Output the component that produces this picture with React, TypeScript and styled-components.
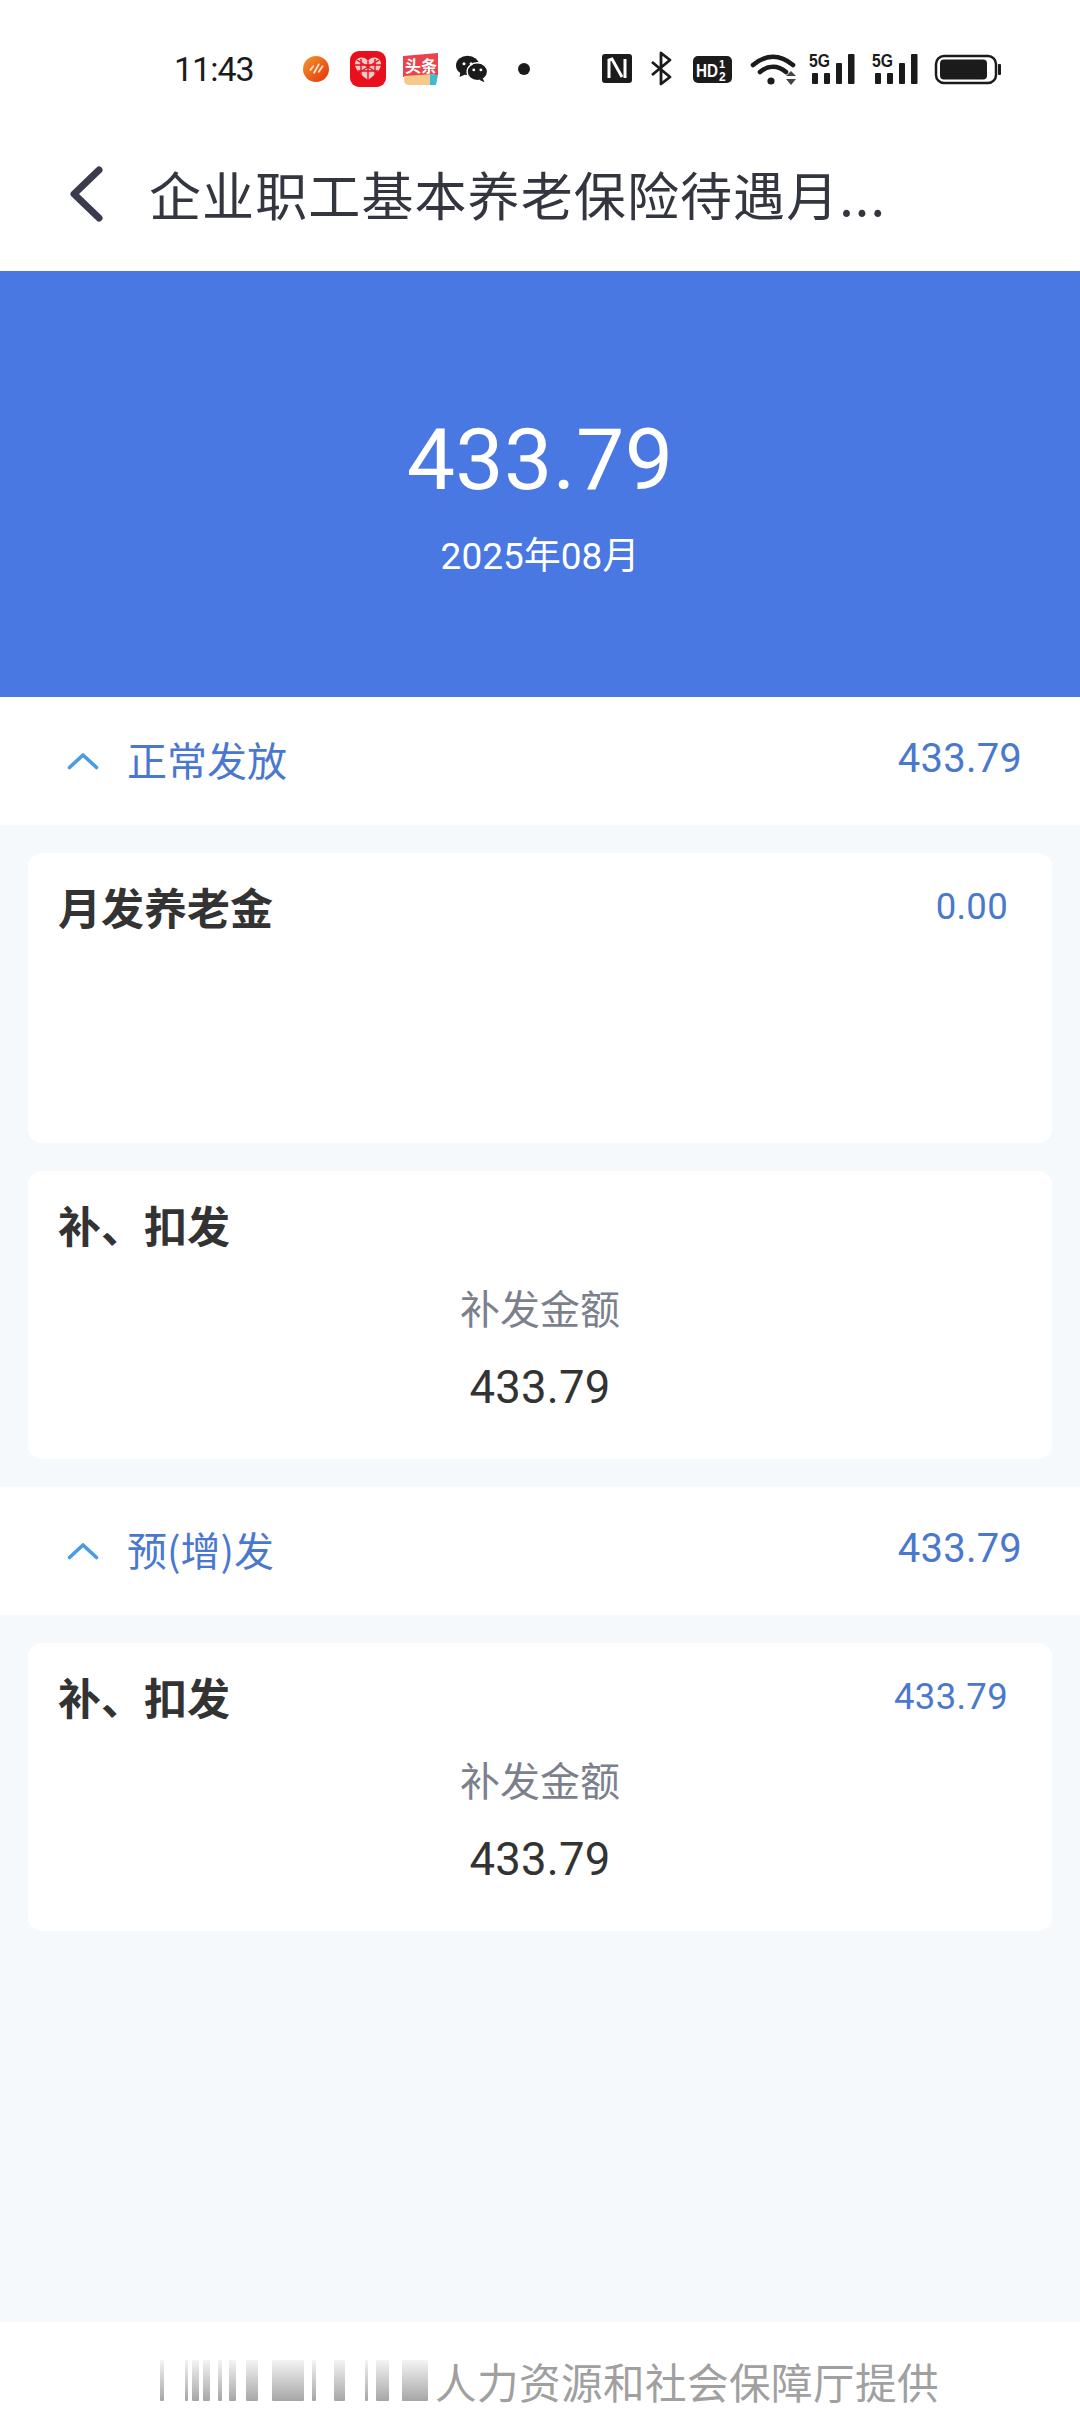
import React from "react";
import styled, { createGlobalStyle } from "styled-components";

const Global = createGlobalStyle`
  html, body { margin: 0; padding: 0; background: #f5f9fc; }
  body { font-family: "Roboto", "Noto Sans CJK SC", sans-serif; }
  * { box-sizing: border-box; }
`;
const Page = styled.div`
  width: 1080px; height: 2412px; display: flex; flex-direction: column; background: #f5f9fc; overflow: hidden;
`;
const StatusBar = styled.div`
  height: 130px; background: #fff; display: flex; align-items: center; padding: 8px 26px 0 174px; color: #1b1b1b; flex: none;
`;
const Clock = styled.div`
  font: 400 34px "Roboto", sans-serif; width: 126px; letter-spacing: -1px; margin-top: -1px;
`;
const AppIcons = styled.div`
  display: flex; align-items: center; width: 300px;
`;
const AppIcon = styled.svg<{ $ml: number }>`
  margin-left: ${(p) => p.$ml}px; flex: none;
`;
const SysIcons = styled.div`
  display: flex; align-items: center; flex: 1;
`;
const NavBar = styled.div`
  height: 141px; background: #fff; display: flex; align-items: center; padding: 0 0 14px 68px; flex: none;
`;
const NavTitle = styled.div`
  font: 400 52px/62px "Noto Sans CJK SC", sans-serif; color: #33353f; margin-left: 45px; white-space: nowrap; letter-spacing: 1.1px;
`;
const Hero = styled.div`
  height: 426px; background: #4a78e2; color: #fff; display: flex; flex-direction: column; align-items: center; padding-top: 157px; flex: none;
`;
const Amount = styled.div`
  font: 400 86px/64px "Roboto", sans-serif; letter-spacing: 0.4px;
`;
const Period = styled.div`
  font: 400 37px/44px "Roboto", "Noto Sans CJK SC", sans-serif; margin-top: 43px;
`;
const SectionHead = styled.div`
  height: 128px; background: #fff; display: flex; align-items: center; padding: 0 58px 0 66px; color: #4a78cf; flex: none;
`;
const SectionTitle = styled.div`
  font: 400 40px/52px "Noto Sans CJK SC", sans-serif; margin-left: 27px; flex: 1; margin-top: -5px;
`;
const SectionValue = styled.div`
  font: 400 40px/48px "Roboto", sans-serif; letter-spacing: 0.2px; margin-top: -4px;
`;
const Cards = styled.div`
  display: flex; flex-direction: column; gap: 28px; padding: 28px 28px; flex: none;
`;
const Card = styled.div<{ $h: number }>`
  height: ${(p) => p.$h}px; background: #fff; border-radius: 14px; padding: 25px 44px 0 30px;
`;
const CardHead = styled.div`
  display: flex; justify-content: space-between; align-items: flex-start;
`;
const CardTitle = styled.div`
  font: 700 43px/56px "Noto Sans CJK SC", sans-serif; color: #333;
`;
const CardValue = styled.div`
  font: 400 36.5px/46px "Roboto", sans-serif; color: #4a78cf; letter-spacing: 0.3px; margin-top: 6px;
`;
const Detail = styled.div`
  display: flex; flex-direction: column; align-items: center; margin: 0 -14px 0 0;
`;
const DetailLabel = styled.div`
  font: 400 40px/52px "Noto Sans CJK SC", sans-serif; color: #7c7f8c; margin-top: 29px;
`;
const DetailValue = styled.div`
  font: 400 45.5px/56px "Roboto", sans-serif; color: #333; margin-top: 27px; letter-spacing: 0.2px;
`;
const Spacer = styled.div`flex: 1;`;
const Footer = styled.div`
  height: 90px; background: #fff; display: flex; align-items: flex-start; padding: 32px 0 0 158px; flex: none;
`;
const Redaction = styled.svg`
  margin-top: 6px; flex: none;
`;
const FooterText = styled.div`
  font: 400 41.6px/54px "Noto Sans CJK SC", sans-serif; color: #a0a0a0; white-space: nowrap; letter-spacing: 0.4px; margin-left: 5px;
`;

const INK = "#1b1b1b";
const Bold = { fontFamily: "Liberation Sans", fontWeight: 700 } as const;

const Signal = ({ x }: { x: number }) => (
  <g transform={`translate(${x} 0)`}>
    <text x="0" y="20" fill={INK} {...Bold} fontSize="19" textLength="21" lengthAdjust="spacingAndGlyphs">5G</text>
    <rect x="3" y="26" width="6" height="11" rx="1" fill={INK} />
    <rect x="15" y="26" width="6" height="11" rx="1" fill={INK} />
    <rect x="27" y="16" width="6" height="21" rx="1" fill={INK} />
    <rect x="39" y="7" width="6.5" height="30" rx="1" fill={INK} />
  </g>
);

const Sys = () => (
  <svg width="404" height="44" viewBox="0 0 404 44">
    <rect x="2" y="7" width="30" height="29" rx="3" fill={INK} />
    <path d="M9 31V13l3-1 10 18M25 12v19" fill="none" stroke="#fff" strokeWidth="3" />
    <path d="M52 15l18 15-9 7V6l9 7-18 15" fill="none" stroke={INK} strokeWidth="2.8" strokeLinejoin="round" />
    <rect x="93" y="9" width="39" height="27" rx="5" fill={INK} />
    <text x="96" y="30" fill="#fff" {...Bold} fontSize="18" textLength="22" lengthAdjust="spacingAndGlyphs">HD</text>
    <text x="119" y="21" fill="#fff" {...Bold} fontSize="11">1</text>
    <text x="119" y="34" fill="#fff" {...Bold} fontSize="12">2</text>
    <path d="M153 18c13-11 27-11 40 0" fill="none" stroke={INK} strokeWidth="4.6" strokeLinecap="round" />
    <path d="M160 25c8-7 18-7 26 0" fill="none" stroke={INK} strokeWidth="4.6" strokeLinecap="round" />
    <circle cx="171" cy="34" r="3.6" fill={INK} />
    <path d="M186 29l5-5 5 5zM186 32h10l-5 6z" fill="#444" />
    <Signal x={209} />
    <Signal x={272} />
    <rect x="336" y="9" width="60" height="27" rx="8" fill="none" stroke={INK} strokeWidth="2.5" />
    <rect x="340" y="12.5" width="47" height="20" rx="4" fill={INK} />
    <rect x="398" y="17" width="3" height="11" rx="1" fill={INK} />
  </svg>
);

const Apps = () => (
  <>
    <AppIcon $ml={3} width="26" height="26" viewBox="0 0 28 28">
      <defs><linearGradient id="o" x1="0" y1="0" x2="1" y2="1"><stop offset="0" stopColor="#f09a2a" /><stop offset="1" stopColor="#e8300c" /></linearGradient></defs>
      <circle cx="14" cy="14" r="14" fill="url(#o)" />
      <path d="M8 15l3-4M12 18l5-9M17 17l4-6" stroke="#ffe2c8" strokeWidth="2" strokeLinecap="round" />
    </AppIcon>
    <AppIcon $ml={21} width="36" height="36" viewBox="0 0 36 36">
      <rect width="36" height="36" rx="9" fill="#e8101c" />
      <path d="M18 29C8 22 5 17 5 13c0-7 9-9 13-3 4-6 13-4 13 3 0 4-3 9-13 16z" fill="#f5c6ca" />
      <path d="M5 14h26M8 20h20M11 8v16M18 10v19M25 8v16M7 9l22 14M29 9L7 23" stroke="#e8101c" strokeWidth="1.4" />
    </AppIcon>
    <AppIcon $ml={16} width="37" height="32" viewBox="0 0 37 32">
      <path d="M1 3l35-3v22l-35 2z" fill="#e9434b" />
      <path d="M2 23l30-2v11H8c-4 0-6-2-6-5z" fill="#f4c98c" />
      <path d="M28 21l8 1-2 10h-6z" fill="#3fbad0" />
      <text x="3" y="19" fill="#fff" fontFamily="Noto Sans CJK SC" fontWeight="700" fontSize="16">头条</text>
    </AppIcon>
    <AppIcon $ml={17} width="32" height="28" viewBox="0 0 36 30">
      <ellipse cx="13" cy="11" rx="13" ry="11" fill={INK} />
      <path d="M5 18l-1 6 7-3z" fill={INK} />
      <ellipse cx="24" cy="18" rx="11.5" ry="10" fill={INK} stroke="#fff" strokeWidth="1.5" />
      <path d="M30 25l2 5-6-3z" fill={INK} />
      <circle cx="9" cy="9" r="1.7" fill="#fff" />
      <circle cx="17" cy="9" r="1.7" fill="#fff" />
      <circle cx="20" cy="16" r="1.6" fill="#fff" />
      <circle cx="28" cy="16" r="1.6" fill="#fff" />
    </AppIcon>
    <AppIcon $ml={30} width="12" height="12" viewBox="0 0 12 12"><circle cx="6" cy="6" r="6" fill={INK} /></AppIcon>
  </>
);

const Back = () => (
  <svg width="36" height="56" viewBox="0 0 36 56">
    <path d="M31 4L6 28l25 24" fill="none" stroke="#3a3c4e" strokeWidth="7" strokeLinecap="round" strokeLinejoin="round" />
  </svg>
);
const Chevron = () => (
  <svg width="34" height="20" viewBox="0 0 34 20">
    <path d="M3.5 16.5L17 4l13.5 12.5" fill="none" stroke="#4a9ae8" strokeWidth="3.6" strokeLinecap="round" strokeLinejoin="round" />
  </svg>
);

const bars: [number, number][] = [
  [2, 4], [27, 3], [34, 7], [45, 7], [60, 4], [71, 7], [88, 12], [114, 32],
  [154, 4], [176, 11], [207, 3], [218, 13], [244, 26],
];
const Redacted = () => (
  <Redaction width="272" height="42" viewBox="0 0 272 42">
    <defs><linearGradient id="r" x1="0" y1="0" x2="0" y2="1"><stop offset="0" stopColor="#f4f4f4" /><stop offset="1" stopColor="#a6a6a6" /></linearGradient></defs>
    {bars.map(([x, w]) => <rect key={x} x={x} y="0" width={w} height="41" rx="1" fill="url(#r)" />)}
  </Redaction>
);

export default function App() {
  return (
    <Page>
      <Global />
      <StatusBar>
        <Clock>11:43</Clock>
        <AppIcons><Apps /></AppIcons>
        <SysIcons><Sys /></SysIcons>
      </StatusBar>
      <NavBar>
        <Back />
        <NavTitle>企业职工基本养老保险待遇月...</NavTitle>
      </NavBar>
      <Hero>
        <Amount>433.79</Amount>
        <Period>2025年08月</Period>
      </Hero>
      <SectionHead>
        <Chevron />
        <SectionTitle>正常发放</SectionTitle>
        <SectionValue>433.79</SectionValue>
      </SectionHead>
      <Cards>
        <Card $h={290}>
          <CardHead>
            <CardTitle>月发养老金</CardTitle>
            <CardValue>0.00</CardValue>
          </CardHead>
        </Card>
        <Card $h={288}>
          <CardHead><CardTitle>补、扣发</CardTitle></CardHead>
          <Detail>
            <DetailLabel>补发金额</DetailLabel>
            <DetailValue>433.79</DetailValue>
          </Detail>
        </Card>
      </Cards>
      <SectionHead>
        <Chevron />
        <SectionTitle>预(增)发</SectionTitle>
        <SectionValue>433.79</SectionValue>
      </SectionHead>
      <Cards>
        <Card $h={288}>
          <CardHead>
            <CardTitle>补、扣发</CardTitle>
            <CardValue>433.79</CardValue>
          </CardHead>
          <Detail>
            <DetailLabel>补发金额</DetailLabel>
            <DetailValue>433.79</DetailValue>
          </Detail>
        </Card>
      </Cards>
      <Spacer />
      <Footer>
        <Redacted />
        <FooterText>人力资源和社会保障厅提供</FooterText>
      </Footer>
    </Page>
  );
}
